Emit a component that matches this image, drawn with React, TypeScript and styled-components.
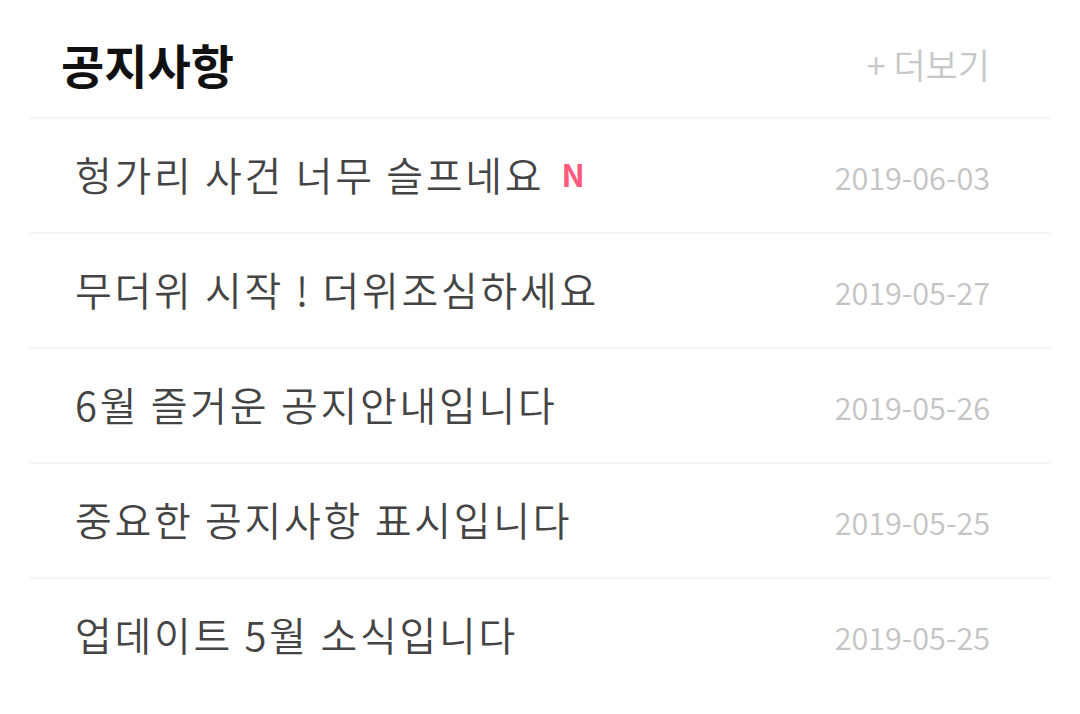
import styled, { createGlobalStyle } from "styled-components";

const GlobalStyle = createGlobalStyle`
    html, body {
        margin: 0;
        padding: 0;
        background: #ffffff;
    }
    body {
        font-family: "Noto Sans CJK KR", "Noto Sans", sans-serif;
    }
`;

interface Notice {
    title: string;
    date: string;
    isNew?: boolean;
}

const notices: Notice[] = [
    { title: "헝가리 사건 너무 슬프네요", date: "2019-06-03", isNew: true },
    { title: "무더위 시작 ! 더위조심하세요", date: "2019-05-27" },
    { title: "6월 즐거운 공지안내입니다", date: "2019-05-26" },
    { title: "중요한 공지사항 표시입니다", date: "2019-05-25" },
    { title: "업데이트 5월 소식입니다", date: "2019-05-25" },
];

const Board = styled.section`
    margin: 0 30px;
`;

const Header = styled.header`
    height: 119px;
    box-sizing: border-box;
    display: flex;
    align-items: center;
    justify-content: space-between;
    padding: 10px 60px 0 31px;
    border-bottom: 2px solid #f3f3f3;
`;

const Title = styled.h2`
    margin: 0;
    font-size: 47px;
    font-weight: 700;
    color: #111111;
    line-height: 1;
`;

const More = styled.a`
    font-size: 35px;
    font-weight: 350;
    color: #c8c8c8;
    text-decoration: none;
    line-height: 1;
    cursor: pointer;
`;

const List = styled.ul`
    list-style: none;
    margin: 0;
    padding: 0;
`;

const Row = styled.li<{ $last: boolean }>`
    height: 115px;
    box-sizing: border-box;
    display: flex;
    align-items: center;
    justify-content: space-between;
    padding: 0 60px 0 45px;
    border-bottom: 2px solid ${(p) => (p.$last ? "transparent" : "#f3f3f3")};
`;

const RowTitle = styled.span`
    display: flex;
    align-items: center;
    gap: 17px;
    font-size: 40px;
    font-weight: 350;
    letter-spacing: 2.7px;
    color: #444444;
    line-height: 1;
    padding-bottom: 4px;
`;

const NewBadge = styled.span`
    font-size: 31px;
    font-weight: 700;
    letter-spacing: 0;
    color: #ff5a7e;
    line-height: 1;
`;

const DateText = styled.span`
    font-size: 30.6px;
    font-weight: 350;
    color: #c4c4c4;
    line-height: 1;
    padding-top: 3px;
`;

export default function App() {
    return (
        <>
            <GlobalStyle />
            <Board>
                <Header>
                    <Title>공지사항</Title>
                    <More>+ 더보기</More>
                </Header>
                <List>
                    {notices.map((n, i) => (
                        <Row key={i} $last={i === notices.length - 1}>
                            <RowTitle>
                                {n.title}
                                {n.isNew && <NewBadge>N</NewBadge>}
                            </RowTitle>
                            <DateText>{n.date}</DateText>
                        </Row>
                    ))}
                </List>
            </Board>
        </>
    );
}
